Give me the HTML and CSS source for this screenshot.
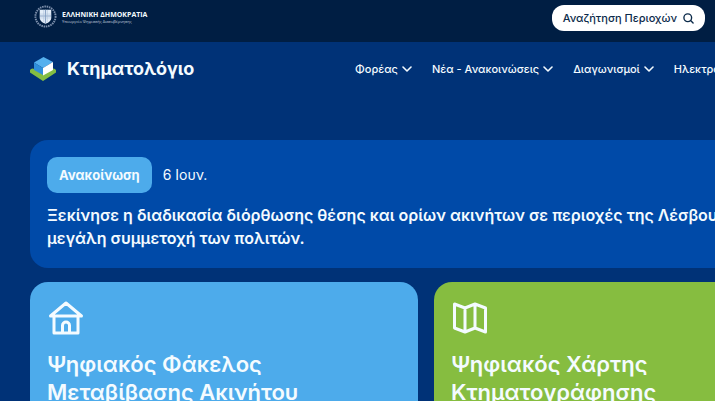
FILE: index.html
```
<!DOCTYPE html>
<html lang="el">
<head>
<meta charset="utf-8">
<meta name="viewport" content="width=device-width, initial-scale=1">
<title>Κτηματολόγιο</title>
<link rel="stylesheet" href="styles.css">
</head>
<body>
<div class="topbar">
  <a class="gov" href="#">
    <svg class="gov-emblem" viewBox="0 0 24 24" aria-hidden="true">
      <circle cx="12" cy="12" r="10.500" fill="none" stroke="#7d90ac" stroke-width="2" stroke-dasharray="1.600 .8"/>
      <path d="M6 5h12v8.500q0 4-6 6q-6-2-6-6z" fill="#e3edf8"/>
      <path d="M12 5v14M6 11.500h12" stroke="#8ba4c6" stroke-width="1.200"/>
      <path d="M10 5v13M14 5v13M6 9.500h12M6 13.500h12" stroke="#a9bdd8" stroke-width=".5"/>
    </svg>
    <span class="gov-text">
      <span class="gov-name">ΕΛΛΗΝΙΚΗ ΔΗΜΟΚΡΑΤΙΑ</span>
      <span class="gov-ministry">Υπουργείο Ψηφιακής Διακυβέρνησης</span>
    </span>
  </a>
  <button class="search" type="button">Αναζήτηση Περιοχών
    <svg class="search-icon" viewBox="0 0 12 12" aria-hidden="true"><circle cx="5.200" cy="5.200" r="4.200"/><path d="M8.300 8.300L11 11"/></svg>
  </button>
</div>
<header class="header">
  <a class="brand" href="#">
    <svg class="brand-logo" viewBox="0 0 28 26" aria-hidden="true">
      <path d="M1 14Q2.500 11.500 5.500 13L14 18L22.500 13Q25.500 11.500 27 14V16.500L14 25L1 16.500z" fill="#83bd43"/>
      <path d="M14.500 1L24 6L14 12L5 6.500z" fill="#55b0ee"/>
      <path d="M5 6.500L14 12V19L5 14z" fill="#2f8fdb"/>
      <path d="M14 12L24 6V14L14 19.500z" fill="#fff"/>
    </svg>
    <span>Κτηματολόγιο</span>
  </a>
  <nav class="nav">
    <a href="#">Φορέας<svg viewBox="0 0 10 6" aria-hidden="true"><path d="M1 1L5 5L9 1"/></svg></a>
    <a href="#">Νέα - Ανακοινώσεις<svg viewBox="0 0 10 6" aria-hidden="true"><path d="M1 1L5 5L9 1"/></svg></a>
    <a href="#">Διαγωνισμοί<svg viewBox="0 0 10 6" aria-hidden="true"><path d="M1 1L5 5L9 1"/></svg></a>
    <a href="#">Ηλεκτρονικές</a>
  </nav>
</header>
<main class="content">
  <article class="notice">
    <div class="notice-meta"><span class="tag">Ανακοίνωση</span><time>6 Ιουν.</time></div>
    <h2>Ξεκίνησε η διαδικασία διόρθωσης θέσης και ορίων ακινήτων σε περιοχές της Λέσβου<br>μεγάλη συμμετοχή των πολιτών.</h2>
  </article>
  <a class="card card-blue" href="#">
    <svg class="card-icon" viewBox="0 0 36 36" aria-hidden="true"><path d="M2.500 16L18 3L33.500 16zM6 16V33H30V16M14.500 32.500V25.500a3.500 3.500 0 0 1 7 0V32.500"/></svg>
    <h3>Ψηφιακός Φάκελος<br>Μεταβίβασης Ακινήτου</h3>
  </a>
  <a class="card card-green" href="#">
    <svg class="card-icon" viewBox="0 0 36 36" aria-hidden="true"><path d="M2.500 4L13 8L23 4L33.500 8V32L23 28L13 32L2.500 28zM13 8V32M23 4V28"/></svg>
    <h3>Ψηφιακός Χάρτης<br>Κτηματογράφησης</h3>
  </a>
</main>
</body>
</html>
```
FILE: styles.css
```
* { box-sizing: border-box; }
body {
  margin: 0;
  background: #003277;
  color: #f4fbff;
  font-family: Inter, "Open Sans", sans-serif;
  overflow: hidden;
}
a { color: inherit; text-decoration: none; }
h2, h3 { margin: 0; }
svg { flex: none; }
.topbar {
  display: flex;
  align-items: flex-start;
  justify-content: space-between;
  height: 42px;
  padding: 5px 10px 0 34px;
  background: #001e43;
}
.gov { display: flex; align-items: center; gap: 5px; font-family: "Open Sans", sans-serif; }
.gov-emblem { width: 23px; height: 23px; }
.gov-text { display: flex; flex-direction: column; padding-top: 2px; }
.gov-name { font-size: 7px; line-height: 8px; font-weight: 700; }
.gov-ministry { font-size: 4px; line-height: 6px; color: #c3cfdf; }
.search {
  display: flex;
  align-items: center;
  gap: 6px;
  height: 26px;
  padding: 0 11px;
  border: 0;
  border-radius: 12px;
  background: #fff;
  color: #0b2a4a;
  font: 500 11px/16px Inter, sans-serif;
  white-space: nowrap;
}
.search-icon { width: 11px; height: 11px; fill: none; stroke: currentColor; stroke-width: 1.500; stroke-linecap: round; }
.header {
  display: flex;
  align-items: center;
  justify-content: space-between;
  height: 54px;
  padding-left: 29px;
}
.brand { display: flex; align-items: center; gap: 10px; font-size: 18px; line-height: 24px; font-weight: 700; }
.brand-logo { width: 28px; height: 26px; }
.nav { display: flex; gap: 20px; width: 360px; font-size: 11px; line-height: 16px; font-weight: 500; white-space: nowrap; }
.nav a { display: flex; align-items: center; gap: 4px; }
.nav svg { width: 10px; height: 6px; fill: none; stroke: currentColor; stroke-width: 1.600; stroke-linecap: round; stroke-linejoin: round; }
.content {
  display: grid;
  grid-template-columns: repeat(2, minmax(388px, 1fr));
  gap: 14px 16px;
  padding: 44px 30px 0;
}
.notice {
  grid-column: 1 / -1;
  padding: 17px 17px 18px;
  border-radius: 18px;
  background: #004aa8;
}
.notice-meta { display: flex; align-items: center; gap: 11px; font-size: 14px; line-height: 20px; }
.tag { padding: 8px 12px; border-radius: 10px; background: #4dabeb; font-size: 13px; font-weight: 700; }
.notice h2 { margin-top: 11px; font-size: 16px; line-height: 23px; font-weight: 600; white-space: nowrap; }
.card { min-height: 180px; padding: 18px 17px; border-radius: 18px; }
.card-blue { background: #4dabeb; }
.card-green { background: #86bd40; }
.card-icon { display: block; width: 36px; height: 36px; margin-left: 1px; fill: none; stroke: currentColor; stroke-width: 3; stroke-linecap: round; stroke-linejoin: round; }
.card h3 { margin-top: 14px; font-size: 22px; line-height: 28px; font-weight: 600; }
```
